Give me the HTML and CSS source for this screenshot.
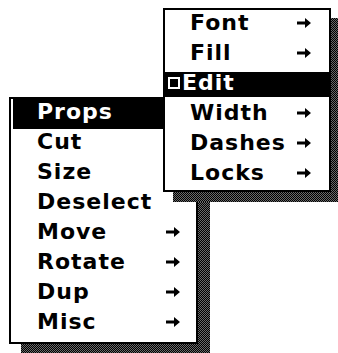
FILE: index.html
```html
<!DOCTYPE html>
<html>
<head>
<meta charset="utf-8">
<link rel="stylesheet" href="styles.css">
</head>
<body>
<div class="desk">
  <div class="popup popup-main">
    <div class="menu menu-main">
      <div class="item sel"><span class="label">Props</span></div>
      <div class="item"><span class="label">Cut</span></div>
      <div class="item"><span class="label">Size</span></div>
      <div class="item"><span class="label">Deselect</span></div>
      <div class="item"><span class="label">Move</span><svg class="arrow" viewBox="0 0 14 10"><path d="M0 3.5h8V0l6 5-6 5V6.5H0z"/></svg></div>
      <div class="item"><span class="label">Rotate</span><svg class="arrow" viewBox="0 0 14 10"><path d="M0 3.5h8V0l6 5-6 5V6.5H0z"/></svg></div>
      <div class="item"><span class="label">Dup</span><svg class="arrow" viewBox="0 0 14 10"><path d="M0 3.5h8V0l6 5-6 5V6.5H0z"/></svg></div>
      <div class="item"><span class="label">Misc</span><svg class="arrow" viewBox="0 0 14 10"><path d="M0 3.5h8V0l6 5-6 5V6.5H0z"/></svg></div>
    </div>
  </div>
  <div class="popup popup-sub">
    <div class="menu menu-sub">
      <div class="item"><span class="label">Font</span><svg class="arrow" viewBox="0 0 14 10"><path d="M0 3.5h8V0l6 5-6 5V6.5H0z"/></svg></div>
      <div class="item"><span class="label">Fill</span><svg class="arrow" viewBox="0 0 14 10"><path d="M0 3.5h8V0l6 5-6 5V6.5H0z"/></svg></div>
      <div class="item sel checked"><span class="box"></span><span class="label">Edit</span></div>
      <div class="item"><span class="label">Width</span><svg class="arrow" viewBox="0 0 14 10"><path d="M0 3.5h8V0l6 5-6 5V6.5H0z"/></svg></div>
      <div class="item"><span class="label">Dashes</span><svg class="arrow" viewBox="0 0 14 10"><path d="M0 3.5h8V0l6 5-6 5V6.5H0z"/></svg></div>
      <div class="item"><span class="label">Locks</span><svg class="arrow" viewBox="0 0 14 10"><path d="M0 3.5h8V0l6 5-6 5V6.5H0z"/></svg></div>
    </div>
  </div>
</div>
</body>
</html>
```
FILE: styles.css
```css
html, body {
  margin: 0;
  padding: 0;
  background: #fff;
}
.desk {
  position: relative;
  width: 338px;
  height: 353px;
  overflow: hidden;
  font-family: "DejaVu Sans", "Liberation Sans", sans-serif;
  font-weight: bold;
  font-size: 22px;
  letter-spacing: 1px;
  color: #000;
}
.popup {
  position: absolute;
}
.popup::before {
  content: "";
  position: absolute;
  background: repeating-conic-gradient(#000 0 25%, #6a6a6a 0 50%) 0 0 / 2px 2px;
}
.popup-main {
  left: 9px;
  top: 97px;
  z-index: 1;
}
.popup-main::before {
  left: 12px;
  top: 12px;
  right: -12px;
  bottom: -12px;
}
.popup-sub {
  left: 163px;
  top: 8px;
  z-index: 2;
}
.popup-sub::before {
  left: 10px;
  top: 10px;
  right: -10px;
  bottom: -10px;
}
.menu {
  position: relative;
  box-sizing: border-box;
  background: #fff;
  border: 2px solid #000;
}
.menu-main {
  width: 189px;
  padding-bottom: 3px;
}
.menu-sub {
  width: 168px;
}
.item {
  display: flex;
  align-items: flex-start;
  height: 30px;
  line-height: 25px;
}
.menu-main .item {
  padding: 0 16px 0 26px;
}
.menu-sub .item {
  padding: 0 18px 0 25px;
}
.label {
  flex: 1;
  white-space: nowrap;
}
.arrow {
  width: 14px;
  height: 10px;
  margin-top: 8px;
  fill: #000;
}
.menu-main .sel {
  background: linear-gradient(#000, #000) 2px 0 / calc(100% - 4px) 100% no-repeat;
  color: #fff;
}
.menu-sub .sel {
  background: linear-gradient(#000, #000) 0 2px / 100% 25px no-repeat;
  color: #fff;
}
.menu-sub .checked {
  padding-left: 3px;
}
.box {
  box-sizing: border-box;
  width: 12px;
  height: 12px;
  margin: 7px 2px 0 0;
  border: 2px solid #fff;
}
```
